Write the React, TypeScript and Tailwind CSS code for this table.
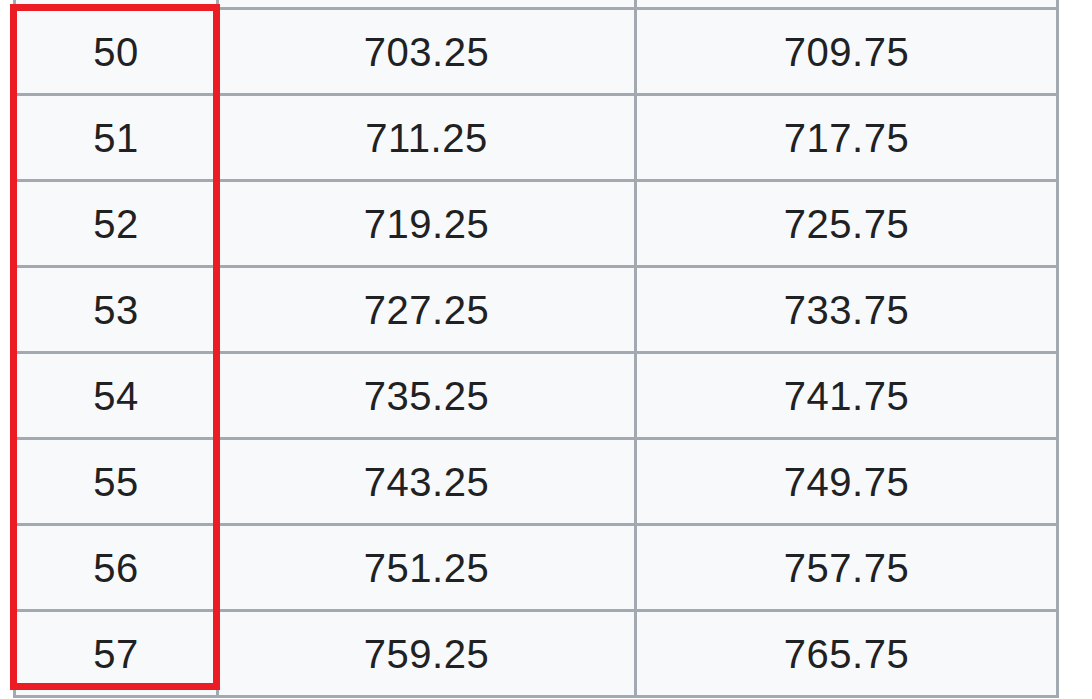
import { Fragment } from 'react'

const rows = [
  { n: '50', a: '703.25', b: '709.75' },
  { n: '51', a: '711.25', b: '717.75' },
  { n: '52', a: '719.25', b: '725.75' },
  { n: '53', a: '727.25', b: '733.75' },
  { n: '54', a: '735.25', b: '741.75' },
  { n: '55', a: '743.25', b: '749.75' },
  { n: '56', a: '751.25', b: '757.75' },
  { n: '57', a: '759.25', b: '765.75' },
]

export default function App() {
  return (
    <div
      className="relative w-[1092px] h-[699px] bg-white overflow-hidden"
      style={{ fontFamily: '"Liberation Sans", Arial, sans-serif' }}
    >
      {/* tabla (la fila de arriba queda cortada) */}
      <div className="ml-[13px] w-[1046px] grid grid-cols-[200px_415px_419px] gap-[3px] bg-[#a2a9b1] px-[3px] pb-[3px] text-[40px] tracking-[0.5px] text-[#202122]">
        <div className="h-[7px] bg-[#f8f9fa]" />
        <div className="h-[7px] bg-[#f8f9fa]" />
        <div className="h-[7px] bg-[#f8f9fa]" />
        {rows.map((r) => (
          <Fragment key={r.n}>
            <div className="h-[83px] bg-[#f8f9fa] flex items-center justify-center">{r.n}</div>
            <div className="h-[83px] bg-[#f8f9fa] flex items-center justify-center">{r.a}</div>
            <div className="h-[83px] bg-[#f8f9fa] flex items-center justify-center">{r.b}</div>
          </Fragment>
        ))}
      </div>

      {/* recuadro rojo sobre la primera columna */}
      <div className="absolute left-[10px] top-[4px] w-[210px] h-[686px] border-[7px] border-[#ec1c24]" />
    </div>
  )
}
